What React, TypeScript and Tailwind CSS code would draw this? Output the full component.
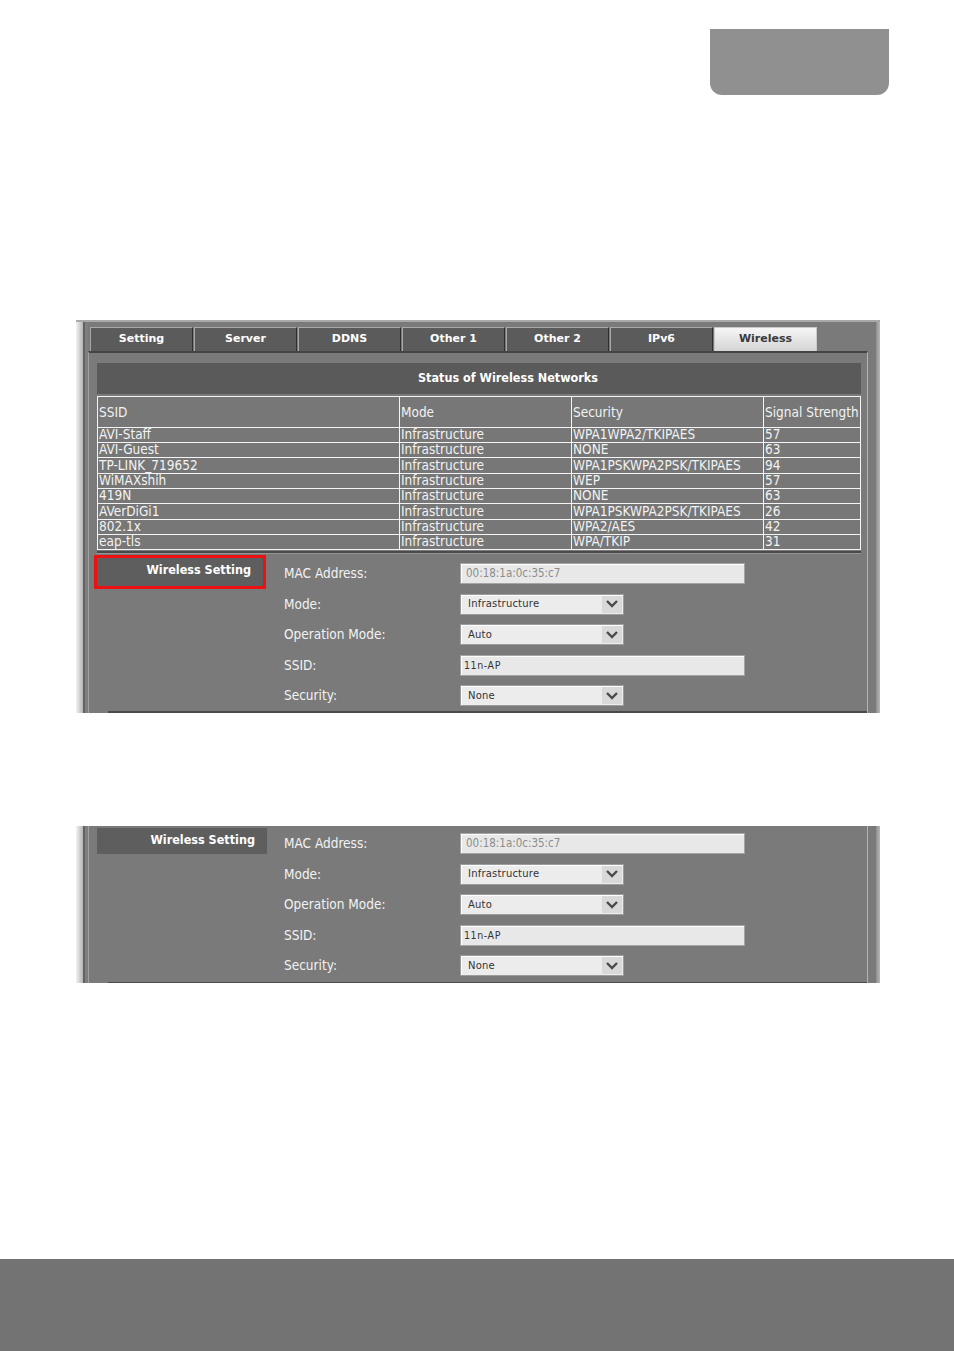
import React from "react";

const F = "font-['DejaVu_Sans_Condensed','DejaVu_Sans',sans-serif]";

const tabs = ["Setting", "Server", "DDNS", "Other 1", "Other 2", "IPv6", "Wireless"];

const rows: [string, string, string, string][] = [
  ["AVI-Staff", "Infrastructure", "WPA1WPA2/TKIPAES", "57"],
  ["AVI-Guest", "Infrastructure", "NONE", "63"],
  ["TP-LINK_719652", "Infrastructure", "WPA1PSKWPA2PSK/TKIPAES", "94"],
  ["WiMAXshih", "Infrastructure", "WEP", "57"],
  ["419N", "Infrastructure", "NONE", "63"],
  ["AVerDiGi1", "Infrastructure", "WPA1PSKWPA2PSK/TKIPAES", "26"],
  ["802.1x", "Infrastructure", "WPA2/AES", "42"],
  ["eap-tls", "Infrastructure", "WPA/TKIP", "31"],
];
const rowH = ["h-[15px]", "h-[15px]", "h-[16px]", "h-[15px]", "h-[15px]", "h-[16px]", "h-[15px]", "h-[15px]"];

function Chevron() {
  return (
    <svg width="14" height="10" viewBox="0 0 14 10">
      <path d="M2 2 L7 7 L12 2" fill="none" stroke="#4a4a4a" strokeWidth="2.4" />
    </svg>
  );
}

function Select({ value }: { value: string }) {
  return (
    <div className="w-[164px] h-[21px] flex items-center bg-[#ececec] border border-[#9c9c9c] shadow-[inset_1px_1px_0_#ffffff]">
      <span className="flex-1 pl-[7px] text-[10px] tracking-[0.2px] text-[#333] font-['DejaVu_Sans',sans-serif] leading-none">
        {value}
      </span>
      <div className="w-[20px] h-[17px] mr-[1px] bg-[#d9d9d9] flex items-center justify-center">
        <Chevron />
      </div>
    </div>
  );
}

function Input({ value, muted }: { value: string; muted?: boolean }) {
  return (
    <div className="w-[285px] h-[21px] flex items-center bg-[#e8e8e8] border border-[#a4a4a4] shadow-[inset_1px_1px_0_#ffffff]">
      <span
        className={`${muted ? "pl-[5px] text-[#8c8c8c] text-[11.5px]" : "pl-[3px] text-[#333] text-[10.5px] tracking-[0.6px]"} ${F} leading-none`}
      >
        {value}
      </span>
    </div>
  );
}

function Form({ red, boxW, boxH }: { red?: boolean; boxW: string; boxH: string }) {
  const items: [string, React.ReactNode, string][] = [
    ["MAC Address:", <Input value="00:18:1a:0c:35:c7" muted />, "h-[31px]"],
    ["Mode:", <Select value="Infrastructure" />, "h-[30px]"],
    ["Operation Mode:", <Select value="Auto" />, "h-[31px]"],
    ["SSID:", <Input value="11n-AP" />, "h-[30px]"],
    ["Security:", <Select value="None" />, "h-[31px]"],
  ];
  return (
    <div className="flex pl-[8px]">
      <div className="w-[187px] shrink-0">
        <div
          className={`${boxW} ${boxH} bg-[#5e5e5e] flex justify-end pt-[4px] pr-[12px] ${
            red ? "outline-[3px] outline-solid outline-[#ee1111]" : ""
          }`}
        >
          <span className={`${F} font-bold text-[12.5px] text-white leading-[16px]`}>Wireless Setting</span>
        </div>
      </div>
      <div className="flex flex-col">
        {items.map(([l, c, h], i) => (
          <div key={i} className={`${h} flex items-center`}>
            <div className={`w-[176px] ${F} text-[13.5px] text-[#f2f2f2]`}>{l}</div>
            {c}
          </div>
        ))}
      </div>
    </div>
  );
}

function LeftEdge() {
  return (
    <>
      <div className="w-[7px] shrink-0 bg-gradient-to-r from-[#f4f4f4] to-[#b4b4b4]" />
      <div className="w-[2px] shrink-0 bg-[#626262]" />
      <div className="w-[3px] shrink-0 bg-[#7e7e7e]" />
    </>
  );
}
function RightEdge() {
  return (
    <>
      <div className="w-[8px] shrink-0 bg-[#7a7a7a]" />
      <div className="w-[4px] shrink-0 bg-gradient-to-r from-[#8e8e8e] to-[#b8b8b8]" />
    </>
  );
}

export default function App() {
  return (
    <div className="w-[954px] h-[1351px] bg-white flex flex-col">
      <div className="mt-[29px] ml-[710px] w-[179px] h-[66px] bg-[#909090] rounded-b-[12px]" />

      {/* Panel 1 */}
      <div className="mt-[225px] ml-[76px] w-[804px] h-[393px] flex bg-[#7a7a7a] border-t-2 border-[#a9a9a9]">
        <LeftEdge />
        <div className="w-[780px] flex flex-col">
          <div className="pt-[5px] pl-[2px] flex h-[29px] shrink-0">
            {tabs.map((t) => {
              const active = t === "Wireless";
              return (
                <div
                  key={t}
                  className={`w-[103px] h-[24px] mr-[1px] flex items-center justify-center border-t border-l border-r ${
                    active
                      ? "bg-gradient-to-b from-[#f6f6f6] to-[#d4d4d4] border-[#c8c8c8] text-[#3a3a3a]"
                      : "bg-[#5b5b5b] border-t-[#a8a8a8] border-l-[#a8a8a8] border-r-[#2e2e2e] text-white"
                  } font-['DejaVu_Sans',sans-serif] font-bold text-[11px]`}
                >
                  {t}
                </div>
              );
            })}
          </div>
          <div className="flex-1 flex flex-col border-t-2 border-t-[#444] border-l border-l-[#a2a2a2] border-r border-r-[#b4b4b4]">
            <div className="pt-[10px] pl-[8px] pr-[6px]">
              <div className="h-[31px] bg-[#5a5a5a] flex items-center justify-center pl-[58px]">
                <span className={`${F} font-bold text-[12.5px] text-white`}>Status of Wireless Networks</span>
              </div>
              <div className={`mt-[2px] border border-[#f4f4f4] ${F} text-[13.5px] text-[#f2f2f2] bg-[#777777]`}>
                <div className="grid grid-cols-[301px_172px_192px_1fr] h-[30px]">
                  {["SSID", "Mode", "Security", "Signal Strength"].map((h, i) => (
                    <div key={h} className={`flex items-center pl-[1px] whitespace-nowrap ${i ? "border-l border-[#f4f4f4]" : ""}`}>
                      {h}
                    </div>
                  ))}
                </div>
                {rows.map((r, ri) => (
                  <div key={ri} className={`grid grid-cols-[301px_172px_192px_1fr] border-t border-[#f4f4f4] ${rowH[ri]}`}>
                    {r.map((c, i) => (
                      <div
                        key={i}
                        className={`flex items-center pl-[1px] leading-none whitespace-nowrap ${
                          i ? "border-l border-[#f4f4f4]" : ""
                        }`}
                      >
                        {c}
                      </div>
                    ))}
                  </div>
                ))}
              </div>
              <div className="mt-[1px] h-[2px] bg-[#4a4a4a]" />
              <div className="h-[1px] bg-[#949494] mb-[4px]" />
            </div>
            <Form red boxW="w-[166px]" boxH="h-[28px]" />
            <div className="ml-[19px] h-[2px] bg-[#4a4a4a]" />
          </div>
        </div>
        <RightEdge />
      </div>

      {/* Panel 2 */}
      <div className="mt-[113px] ml-[76px] w-[804px] h-[157px] flex bg-[#7a7a7a]">
        <LeftEdge />
        <div className="w-[780px] flex flex-col border-l border-l-[#a2a2a2] border-r border-r-[#b4b4b4] pt-[2px]">
          <Form boxW="w-[170px]" boxH="h-[26px]" />
          <div className="mt-[1px] ml-[19px] h-[2px] bg-[#4a4a4a]" />
        </div>
        <RightEdge />
      </div>

      <div className="mt-[276px] h-[92px] bg-[#737373]" />
    </div>
  );
}
